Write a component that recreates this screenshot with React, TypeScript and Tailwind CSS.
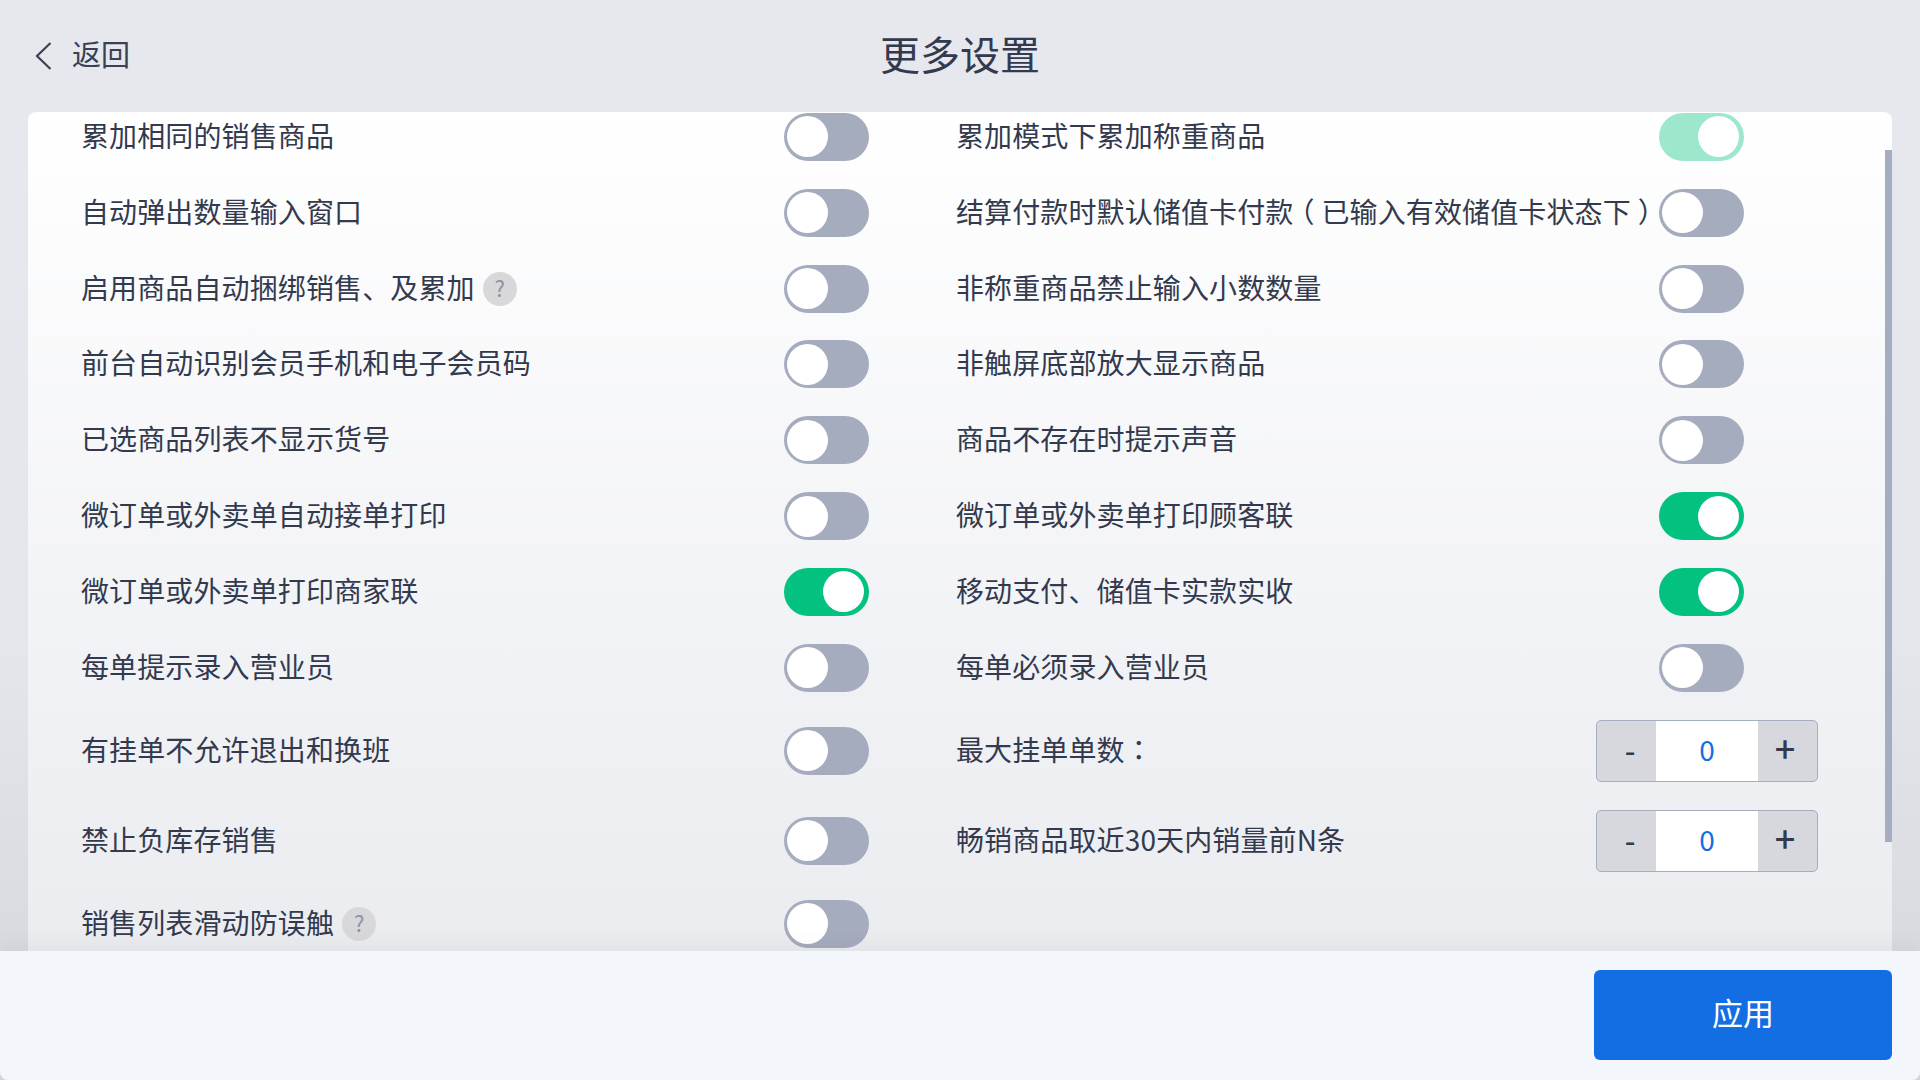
import type { ReactNode } from 'react';

const fontStack = '"Noto Sans CJK SC", "Liberation Sans", sans-serif';

type Item = { label: ReactNode; on?: boolean; faded?: boolean; help?: boolean };

// the reference centres full-width punctuation, the TC cut does that for the colon
const Punct = ({ children }: { children: string }) => (
  <span style={{ fontFamily: '"Noto Sans CJK TC", sans-serif' }}>{children}</span>
);

// half-width form of the bracket, centred in its one-character cell
const Bracket = ({ children }: { children: string }) => (
  <span className="inline-block w-[28px] text-center [font-feature-settings:'halt']">{children}</span>
);

const left: Item[] = [
  { label: '累加相同的销售商品' },
  { label: '自动弹出数量输入窗口' },
  { label: '启用商品自动捆绑销售、及累加', help: true },
  { label: '前台自动识别会员手机和电子会员码' },
  { label: '已选商品列表不显示货号' },
  { label: '微订单或外卖单自动接单打印' },
  { label: '微订单或外卖单打印商家联', on: true },
  { label: '每单提示录入营业员' },
];

const right: Item[] = [
  { label: '累加模式下累加称重商品', on: true, faded: true },
  {
    label: (
      <>
        结算付款时默认储值卡付款<Bracket>（</Bracket>已输入有效储值卡状态下<Bracket>）</Bracket>
      </>
    ),
  },
  { label: '非称重商品禁止输入小数数量' },
  { label: '非触屏底部放大显示商品' },
  { label: '商品不存在时提示声音' },
  { label: '微订单或外卖单打印顾客联', on: true },
  { label: '移动支付、储值卡实款实收', on: true },
  { label: '每单必须录入营业员' },
];

function Toggle({ on, faded }: { on?: boolean; faded?: boolean }) {
  return (
    <div
      className={`flex h-[48px] w-[85px] shrink-0 items-center rounded-full ${
        on
          ? faded
            ? 'justify-end bg-[#9de8cd] pr-[5px]'
            : 'justify-end bg-[#03c17e] pr-[5px]'
          : 'justify-start bg-[#a5acbe] pl-[3px]'
      }`}
    >
      <div className="h-[41px] w-[41px] rounded-full bg-white" />
    </div>
  );
}

function Help() {
  return (
    <span className="ml-[8px] flex h-[34px] w-[34px] shrink-0 items-center justify-center rounded-full bg-[#d8d8da] pb-[2px] text-[22px] text-[#8d93a6]">
      ?
    </span>
  );
}

function Label({ children }: { children: ReactNode }) {
  return <span className="-ml-[1px] pb-[4px] tracking-[0.12px]">{children}</span>;
}

function Row({ item, tall }: { item: Item; tall?: boolean }) {
  return (
    <div className={`flex items-center ${tall ? 'h-[90px]' : 'h-[75.84px]'}`}>
      <div className="flex w-[702px] items-center whitespace-nowrap">
        <Label>{item.label}</Label>
        {item.help && <Help />}
      </div>
      <Toggle on={item.on} faded={item.faded} />
    </div>
  );
}

function Stepper() {
  return (
    <div className="flex h-[62px] w-[222px] overflow-hidden rounded-[5px] border border-[#a5adc0] bg-[#d7d8dd]">
      <div className="flex w-[59px] items-center justify-center pb-[2px] pl-[7px] text-[30px] font-medium">-</div>
      <div className="flex w-[102px] items-center justify-center bg-white pb-[4px] text-[#136ee4]">0</div>
      <div className="flex w-[59px] items-center justify-center pb-[8px] pr-[5px] text-[36px] font-medium">+</div>
    </div>
  );
}

function StepperRow({ label }: { label: ReactNode }) {
  return (
    <div className="flex h-[90px] w-[861px] items-center justify-between whitespace-nowrap">
      <Label>{label}</Label>
      <Stepper />
    </div>
  );
}

export default function App() {
  return (
    <div
      className="flex h-[1080px] w-[1920px] flex-col overflow-hidden bg-[linear-gradient(180deg,#e6e8ee_0%,#e4e6eb_60%,#d3d5da_100%)] text-[#333a4e]"
      style={{ fontFamily: fontStack }}
    >
      {/* Header */}
      <div className="relative flex h-[112px] shrink-0 items-center justify-center">
        <div className="absolute left-[35px] flex items-center gap-[20px] text-[29px] text-[#3a4154]">
          <svg className="-mt-[1px] h-[28px] w-[17px]" viewBox="0 0 17 28" fill="none" stroke="currentColor" strokeWidth={2.2}>
            <path d="M15.5 1 2 14l13.5 13" />
          </svg>
          <span className="pb-[4px]">返回</span>
        </div>
        <h1 className="pb-[7px] text-[40px]">更多设置</h1>
      </div>

      {/* Settings list */}
      <div className="relative mx-[28px] h-[839px] shrink-0 overflow-hidden rounded-t-[8px] bg-[linear-gradient(180deg,#ffffff_0%,#f2f3f6_60%,#ebecf0_100%)] text-[28px]">
        <div className="absolute right-0 top-[38px] h-[692px] w-[7px] bg-[#a5adc0]" />
        <div className="-mt-[13px] grid grid-cols-[875px_875px] pl-[54px]">
          {left.map((item, i) => (
            <div key={i} className="contents">
              <Row item={item} />
              <Row item={right[i]} />
            </div>
          ))}

          <Row item={{ label: '有挂单不允许退出和换班' }} tall />
          <StepperRow
            label={
              <>
                最大挂单单数<Punct>：</Punct>
              </>
            }
          />

          <Row item={{ label: '禁止负库存销售' }} tall />
          <StepperRow label="畅销商品取近30天内销量前N条" />

          <Row item={{ label: '销售列表滑动防误触', help: true }} />
          <div />
        </div>
      </div>

      {/* Footer */}
      <div className="relative flex flex-1 items-center justify-end rounded-b-[8px] bg-[#f3f6fb] pb-[1px] pr-[28px] shadow-[0_-8px_20px_rgba(0,0,0,0.04)]">
        <button className="h-[90px] w-[298px] rounded-[6px] bg-[#136ee4] pb-[5px] text-[31px] text-white">应用</button>
      </div>
    </div>
  );
}
